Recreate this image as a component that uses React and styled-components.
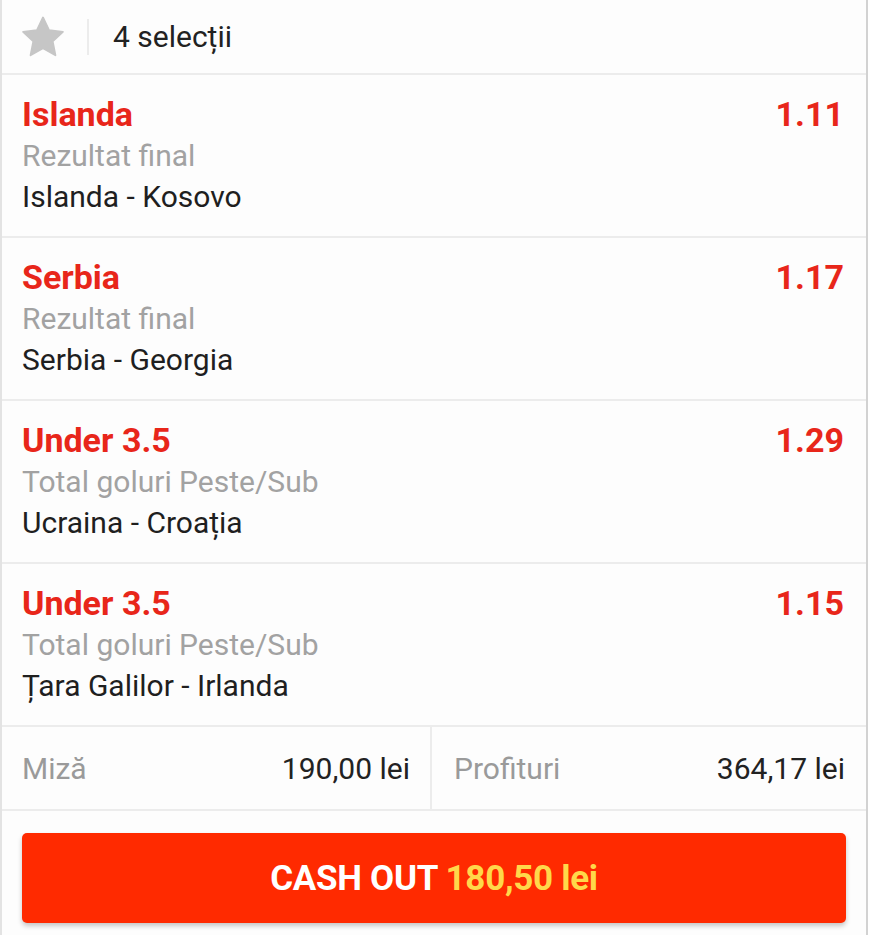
import React from 'react';
import styled, { createGlobalStyle } from 'styled-components';

const GlobalStyle = createGlobalStyle`
  html, body {
    margin: 0;
    padding: 0;
    background: #fff;
  }
  body {
    font-family: Roboto, "Noto Sans", Arial, sans-serif;
  }
`;

const Slip = styled.div`
  width: 864px;
  min-height: 935px;
  border-left: 2px solid #e3e3e3;
  border-right: 2px solid #d2d2d2;
  background: #fdfdfd;
  box-sizing: content-box;
`;

const Header = styled.div`
  display: flex;
  align-items: center;
  height: 75px;
  padding-left: 19px;
  border-bottom: 2px solid #ececec;
  box-sizing: border-box;
`;

const StarBox = styled.div`
  display: flex;
  align-items: center;
  padding-right: 22px;
  height: 36px;
  border-right: 2px solid #ececec;
`;

const HeaderTitle = styled.span`
  margin-left: 24px;
  font-size: 30px;
  color: #222;
`;

const Selection = styled.div`
  display: flex;
  justify-content: space-between;
  height: 163px;
  padding: 18px 22px 0 20px;
  border-bottom: 2px solid #ececec;
  box-sizing: border-box;
`;

const Info = styled.div`
  display: flex;
  flex-direction: column;
`;

const Pick = styled.div`
  font-size: 34px;
  font-weight: 700;
  color: #e8261a;
  line-height: 42px;
`;

const Market = styled.div`
  font-size: 30px;
  color: #a2a2a2;
  line-height: 40px;
  margin-top: 1px;
`;

const Match = styled.div`
  font-size: 30px;
  color: #1f1f1f;
  line-height: 41px;
`;

const Odds = styled.div`
  font-size: 34px;
  font-weight: 700;
  color: #e8261a;
  line-height: 42px;
`;

const Totals = styled.div`
  display: grid;
  grid-template-columns: 430px 1fr;
  height: 82px;
  border-bottom: 2px solid #ececec;
`;

const TotalCell = styled.div`
  display: flex;
  justify-content: space-between;
  align-items: center;
  padding: 0 ${(p) => (p.$last ? '21px' : '20px')} 0 ${(p) => (p.$last ? '22px' : '20px')};
  border-right: ${(p) => (p.$last ? 'none' : '2px solid #ececec')};
  font-size: 30px;
`;

const Label = styled.span`
  color: #9a9a9a;
`;

const Value = styled.span`
  color: #222;
`;

const ButtonWrap = styled.div`
  padding: 22px 20px 0 20px;
`;

const CashOut = styled.button`
  width: 100%;
  height: 90px;
  border: none;
  border-radius: 5px;
  background: #ff2a00;
  box-shadow: 0 3px 5px rgba(0, 0, 0, 0.22);
  font-family: Roboto, Arial, sans-serif;
  font-size: 35px;
  font-weight: 700;
  color: #fff;
  letter-spacing: -0.3px;
  cursor: pointer;
`;

const Amount = styled.span`
  color: #ffd84a;
`;

const selections = [
  { pick: 'Islanda', market: 'Rezultat final', match: 'Islanda - Kosovo', odds: '1.11' },
  { pick: 'Serbia', market: 'Rezultat final', match: 'Serbia - Georgia', odds: '1.17' },
  { pick: 'Under 3.5', market: 'Total goluri Peste/Sub', match: 'Ucraina - Croația', odds: '1.29' },
  { pick: 'Under 3.5', market: 'Total goluri Peste/Sub', match: 'Țara Galilor - Irlanda', odds: '1.15' },
];

function StarIcon() {
  return (
    <svg width="44" height="42" viewBox="0 0 24 23">
      <path
        d="M12 0.8l3.3 7 7.6.9-5.6 5.2 1.5 7.6L12 17.7l-6.8 3.8 1.5-7.6L1.1 8.7l7.6-.9z"
        fill="#c6c6c6"
        stroke="#c6c6c6"
        strokeWidth="1"
        strokeLinejoin="round"
      />
    </svg>
  );
}

export default function App() {
  return (
    <>
      <GlobalStyle />
      <Slip>
        <Header>
          <StarBox>
            <StarIcon />
          </StarBox>
          <HeaderTitle>4 selecții</HeaderTitle>
        </Header>
        {selections.map((s, i) => (
          <Selection key={i}>
            <Info>
              <Pick>{s.pick}</Pick>
              <Market>{s.market}</Market>
              <Match>{s.match}</Match>
            </Info>
            <Odds>{s.odds}</Odds>
          </Selection>
        ))}
        <Totals>
          <TotalCell>
            <Label>Miză</Label>
            <Value>190,00 lei</Value>
          </TotalCell>
          <TotalCell $last>
            <Label>Profituri</Label>
            <Value>364,17 lei</Value>
          </TotalCell>
        </Totals>
        <ButtonWrap>
          <CashOut>
            CASH OUT <Amount>180,50 lei</Amount>
          </CashOut>
        </ButtonWrap>
      </Slip>
    </>
  );
}
